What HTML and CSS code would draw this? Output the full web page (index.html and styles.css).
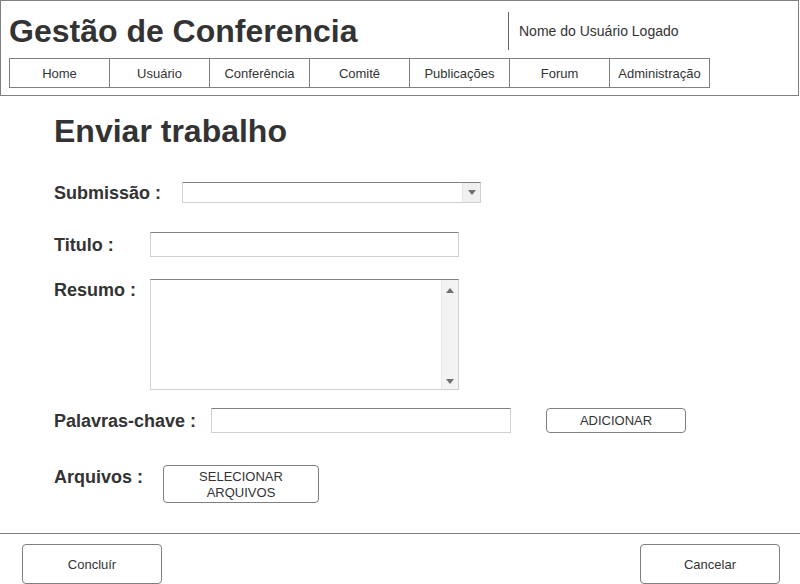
FILE: index.html
```html
<!DOCTYPE html>
<html lang="pt">
<head>
<meta charset="utf-8">
<title>Gestão de Conferencia</title>
<link rel="stylesheet" href="styles.css">
</head>
<body>
<div class="header">
  <div class="top">
    <div class="title">Gestão de Conferencia</div>
    <div class="user">Nome do Usuário Logado</div>
  </div>
  <div class="nav">
    <div class="nav-item">Home</div>
    <div class="nav-item">Usuário</div>
    <div class="nav-item">Conferência</div>
    <div class="nav-item">Comitê</div>
    <div class="nav-item">Publicações</div>
    <div class="nav-item">Forum</div>
    <div class="nav-item last">Administração</div>
  </div>
</div>

<div class="main">
  <h1 class="heading">Enviar trabalho</h1>

  <div class="row row-sub">
    <div class="label w-sub">Submissão :</div>
    <div class="select"><span class="select-btn"><span class="tri-down"></span></span></div>
  </div>

  <div class="row row-tit">
    <div class="label w-tit">Titulo :</div>
    <div class="input w-309"></div>
  </div>

  <div class="row row-res top-align">
    <div class="label w-tit">Resumo :</div>
    <div class="textarea">
      <div class="scroll">
        <span class="tri-up"></span>
        <span class="tri-down"></span>
      </div>
    </div>
  </div>

  <div class="row row-pal">
    <div class="label w-pal">Palavras-chave :</div>
    <div class="input w-300"></div>
    <div class="btn btn-add">ADICIONAR</div>
  </div>

  <div class="row row-arq top-align">
    <div class="label w-arq lbl-arq">Arquivos :</div>
    <div class="btn btn-sel">SELECIONAR<br>ARQUIVOS</div>
  </div>
</div>

<div class="footer">
  <div class="btn btn-foot">Concluír</div>
  <div class="btn btn-foot">Cancelar</div>
</div>
</body>
</html>
```

FILE: styles.css
```css
html, body {
  margin: 0;
  padding: 0;
}
body {
  width: 800px;
  height: 584px;
  overflow: hidden;
  font-family: "Liberation Sans", Arial, sans-serif;
  color: #333;
  background: #fff;
}

.header {
  box-sizing: border-box;
  width: 799px;
  height: 96px;
  border: 1px solid #808080;
  padding-left: 8px;
}
.top {
  display: flex;
  height: 57px;
}
.title {
  flex: 1;
  font-size: 32px;
  font-weight: bold;
  line-height: 32px;
  padding-top: 14px;
}
.user {
  width: 279px;
  margin-top: 11px;
  height: 38px;
  line-height: 38px;
  border-left: 1px solid #666;
  padding-left: 10px;
  font-size: 14px;
}
.nav {
  display: flex;
}
.nav-item {
  box-sizing: border-box;
  width: 100px;
  height: 30px;
  line-height: 27px;
  padding-top: 1px;
  border: 1px solid #808080;
  border-right: none;
  text-align: center;
  font-size: 13px;
}
.nav-item.last {
  width: 101px;
  border-right: 1px solid #808080;
}

.main {
  padding-left: 54px;
}
.heading {
  margin: 17px 0 0 0;
  font-size: 32px;
  line-height: 36px;
  font-weight: bold;
}
.row {
  display: flex;
  align-items: center;
}
.row.top-align {
  align-items: flex-start;
}
.row-sub { margin-top: 33px; }
.row-tit { margin-top: 29px; }
.row-res { margin-top: 22px; }
.row-pal { margin-top: 18px; }
.row-arq { margin-top: 32px; }

.label {
  flex-shrink: 0;
  font-size: 18px;
  font-weight: bold;
  line-height: 19px;
  padding-top: 2px;
  white-space: nowrap;
}
.w-sub { width: 128px; }
.w-tit { width: 96px; }
.w-pal { width: 157px; }
.w-arq { width: 109px; }
.lbl-arq { padding-top: 3px; }

.select {
  box-sizing: border-box;
  width: 299px;
  height: 21px;
  border: 1px solid #d0d0d0;
  border-top-color: #808080;
  display: flex;
  justify-content: flex-end;
}
.select-btn {
  width: 17px;
  background: #f0f0f0;
  border-left: 1px solid #e4e4e4;
  display: flex;
  align-items: center;
  justify-content: center;
}
.tri-down {
  width: 0;
  height: 0;
  border-left: 4px solid transparent;
  border-right: 4px solid transparent;
  border-top: 5px solid #707070;
}
.tri-up {
  width: 0;
  height: 0;
  border-left: 4px solid transparent;
  border-right: 4px solid transparent;
  border-bottom: 5px solid #707070;
}
.input {
  box-sizing: border-box;
  height: 25px;
  border: 1px solid #d0d0d0;
  border-top-color: #808080;
}
.w-309 { width: 309px; }
.w-300 { width: 300px; }

.textarea {
  box-sizing: border-box;
  width: 309px;
  height: 111px;
  border: 1px solid #d0d0d0;
  border-top-color: #808080;
  display: flex;
  justify-content: flex-end;
}
.scroll {
  width: 16px;
  background: #f3f3f3;
  border-left: 1px solid #e8e8e8;
  display: flex;
  flex-direction: column;
  justify-content: space-between;
  align-items: center;
  padding: 8px 0 5px;
}

.btn {
  box-sizing: border-box;
  border: 1px solid #808080;
  border-radius: 4px;
  background: #fff;
  font-size: 13px;
  color: #333;
  display: flex;
  align-items: center;
  justify-content: center;
  text-align: center;
}
.btn-add {
  width: 140px;
  height: 25px;
  margin-left: 35px;
}
.btn-sel {
  width: 156px;
  height: 38px;
  line-height: 16px;
  padding-top: 2px;
}

.footer {
  margin-top: 30px;
  border-top: 1px solid #808080;
  padding: 10px 20px 0 22px;
  display: flex;
  justify-content: space-between;
}
.btn-foot {
  width: 140px;
  height: 40px;
}
```
